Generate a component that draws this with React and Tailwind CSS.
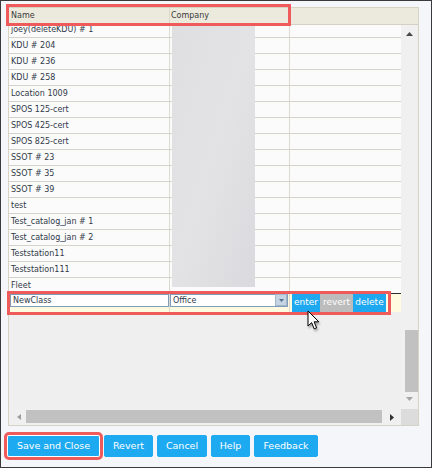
import React from "react";

const rows = [
  "joey(deleteKDU) # 1",
  "KDU # 204",
  "KDU # 236",
  "KDU # 258",
  "Location 1009",
  "SPOS 125-cert",
  "SPOS 425-cert",
  "SPOS 825-cert",
  "SSOT # 23",
  "SSOT # 35",
  "SSOT # 39",
  "test",
  "Test_catalog_jan # 1",
  "Test_catalog_jan # 2",
  "Teststation11",
  "Teststation111",
  "Fleet",
];

function Row({ name, last }) {
  return (
    <div
      className={
        "flex h-[16px] border-b bg-[#fbfbfb] " +
        (last ? "border-[#2e2e2e]" : "border-[#d6d3c9]")
      }
    >
      <div className="w-[161px] border-r border-[#dcd9cf] flex items-center pl-[2px] text-[8px] text-[#313a48] whitespace-nowrap overflow-hidden">
        {name}
      </div>
      <div className="w-[120px] border-r border-[#dcd9cf]"></div>
      <div className="flex-1"></div>
    </div>
  );
}

function BottomButton({ children, className = "" }) {
  return (
    <button
      className={
        "h-[22px] flex items-center justify-center rounded-[2px] bg-[#1eaaf1] text-white text-[9.5px] border " +
        className
      }
    >
      {children}
    </button>
  );
}

export default function App() {
  return (
    <div className="relative w-[432px] h-[468px] bg-[#f5f6f9] border border-[#3a3a3a] overflow-hidden font-['DejaVu_Sans',sans-serif]">
      {/* grid panel */}
      <div className="ml-[7px] mt-[6px] w-[411px] h-[419px] border border-[#d6d2c4] flex flex-col bg-[#efefef]">
        {/* header */}
        <div className="h-[17px] flex border-b border-[#d4d0c3] bg-[#ece9dd] text-[8px] text-[#3a3a3a]">
          <div className="w-[161px] pl-[2px] flex items-center border-r border-[#dcd8cb]">Name</div>
          <div className="w-[120px] pl-[1px] flex items-center border-r border-[#dcd8cb]">Company</div>
          <div className="flex-1"></div>
        </div>
        {/* body */}
        <div className="flex-1 flex min-h-0">
          <div className="flex-1 flex flex-col relative">
            <div className="overflow-hidden">
              <div className="-mt-[3px]">
                {rows.map((r, i) => (
                  <Row key={r} name={r} last={i === rows.length - 1} />
                ))}
              </div>
            </div>
            {/* edit row */}
            <div className="flex h-[18px] bg-[#fffbe1]">
              <div className="w-[161px] border-r border-[#dcd9cf]">
                <div className="ml-[1px] w-[159px] h-[13px] border border-[#7f9db9] bg-white text-[8px] text-[#313a48] pl-[2px] flex items-center">
                  NewClass
                </div>
              </div>
              <div className="w-[120px] border-r border-[#dcd9cf]">
                <div className="w-[118px] h-[13px] border border-[#7f9db9] bg-white flex">
                  <div className="flex-1 text-[8px] text-[#313a48] pl-[2px] flex items-center">Office</div>
                  <div className="w-[12px] h-[12px] -mt-[1px] bg-[#c5d4e3] border border-[#a3b8cc] flex items-center justify-center">
                    <svg width="5" height="3" viewBox="0 0 5 3">
                      <path d="M0 0 L5 0 L2.5 3 Z" fill="#4f7293" />
                    </svg>
                  </div>
                </div>
              </div>
              <div className="flex ml-[2px] text-[9px] text-white">
                <div className="w-[28px] h-[18px] bg-[#1ea8ef] flex items-center justify-center">enter</div>
                <div className="w-[33px] h-[18px] bg-[#bcbcbc] flex items-center justify-center">revert</div>
                <div className="w-[33px] h-[18px] bg-[#1ea8ef] flex items-center justify-center">delete</div>
              </div>
              <div className="flex-1"></div>
            </div>
            <div className="flex-1 bg-[#efefef]"></div>
            {/* blurred company values */}
            <div className="absolute left-[163px] top-0 w-[83px] h-[262px] bg-gradient-to-br from-[#dfdfe2] via-[#e3e3e5] to-[#dadade]"></div>
          </div>
          {/* vertical scrollbar */}
          <div className="w-[17px] bg-[#f0f0f0] flex flex-col items-center">
            <svg className="mt-[7px] shrink-0" width="7" height="4" viewBox="0 0 7 4">
              <path d="M0 4 L3.5 0 L7 4 Z" fill="#474747" />
            </svg>
            <div className="flex-1"></div>
            <div className="self-end w-[13px] h-[62px] bg-[#c1c1c1]"></div>
            <svg className="mt-[5px] mb-[8px] shrink-0" width="7" height="4" viewBox="0 0 7 4">
              <path d="M0 0 L7 0 L3.5 4 Z" fill="#a6a6a6" />
            </svg>
          </div>
        </div>
        {/* horizontal scrollbar */}
        <div className="h-[16px] flex bg-[#f0f0f0]">
          <div className="w-[17px] flex items-center justify-center">
            <svg className="ml-[2px]" width="4" height="6" viewBox="0 0 4 6">
              <path d="M4 0 L0 3 L4 6 Z" fill="#9c9c9c" />
            </svg>
          </div>
          <div className="flex-1 mt-[1px] h-[13px] bg-[#c1c1c1]"></div>
          <div className="w-[19px] flex items-center justify-center">
            <svg width="4" height="7" viewBox="0 0 4 7">
              <path d="M0 0 L4 3.5 L0 7 Z" fill="#333" />
            </svg>
          </div>
          <div className="w-[17px] bg-[#dcdcdc]"></div>
        </div>
      </div>

      {/* bottom buttons */}
      <div className="flex gap-[4px] ml-[6px] mt-[9px]">
        <BottomButton className="w-[93px] border-white outline-[3px] outline-solid outline-[#ef5b5b]">
          Save and Close
        </BottomButton>
        <BottomButton className="w-[49px] border-[#1eaaf1]">Revert</BottomButton>
        <BottomButton className="w-[50px] border-[#1eaaf1]">Cancel</BottomButton>
        <BottomButton className="w-[39px] border-[#1eaaf1]">Help</BottomButton>
        <BottomButton className="w-[64px] border-[#1eaaf1]">Feedback</BottomButton>
      </div>

      {/* annotation boxes */}
      <div className="absolute left-[5px] top-[3px] w-[285px] h-[22px] border-[3px] border-[#ef5b5b]"></div>
      <div className="absolute left-[6px] top-[290px] w-[384px] h-[24px] border-[3px] border-[#ef5b5b]"></div>

      {/* mouse cursor */}
      <svg
        className="absolute left-[306px] top-[309px] drop-shadow-[1px_2px_1px_rgba(0,0,0,0.35)]"
        width="13"
        height="21"
        viewBox="0 0 13 21"
      >
        <path
          d="M1 1 L1 16 L4.6 12.6 L7.2 18.8 L9.6 17.8 L7.1 11.8 L11.8 11.8 Z"
          fill="white"
          stroke="black"
          strokeWidth="1"
          strokeLinejoin="miter"
        />
      </svg>
    </div>
  );
}
